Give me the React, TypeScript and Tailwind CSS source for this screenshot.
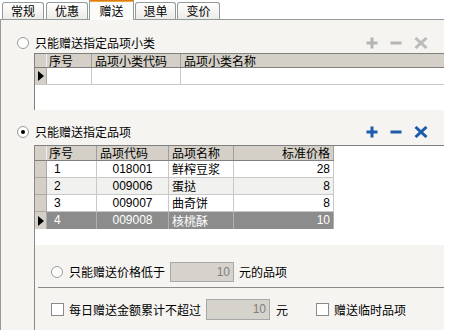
import React from "react";

const CJK = { fontFamily: '"Noto Sans CJK SC", "Noto Sans", sans-serif' };

function Plus({ c }: { c: string }) {
  return (
    <svg width="12" height="12" viewBox="0 0 12 12">
      <rect x="4.5" y="0.5" width="3" height="11" fill={c} />
      <rect x="0.5" y="4.5" width="11" height="3" fill={c} />
    </svg>
  );
}
function Minus({ c }: { c: string }) {
  return (
    <svg width="12" height="12" viewBox="0 0 12 12">
      <rect x="0.5" y="4.5" width="11" height="3" fill={c} />
    </svg>
  );
}
function Cross({ c }: { c: string }) {
  return (
    <svg width="14" height="12" viewBox="0 0 14 12">
      <path d="M1.5 1 L12.5 11 M12.5 1 L1.5 11" stroke={c} strokeWidth="3" />
    </svg>
  );
}

function Radio({ on }: { on?: boolean }) {
  return (
    <div className="w-[12px] h-[12px] rounded-full border border-[#9a9a9a] bg-white flex items-center justify-center shrink-0">
      {on && <div className="w-[4px] h-[4px] rounded-full bg-black" />}
    </div>
  );
}
function Check() {
  return <div className="w-[13px] h-[13px] border border-[#8a8a8a] bg-white shrink-0" />;
}

function Tab({ label, active, cls }: { label: string; active?: boolean; cls: string }) {
  if (active)
    return (
      <div className={"h-[20px] -mb-[1px] border-x border-[#919b9c] bg-[#fbfbfa] flex flex-col relative z-10 " + cls}>
        <div className="h-[3px] bg-[#f0a640] border-t border-[#e07a10]" />
        <div className="flex-1 flex items-center justify-center text-[12px] text-black">{label}</div>
      </div>
    );
  return (
    <div className={"h-[17px] border border-b-0 border-[#919b9c] rounded-t-[3px] bg-gradient-to-b from-white to-[#ecebe6] flex items-center justify-center text-[12px] text-black " + cls}>
      {label}
    </div>
  );
}

const indCls = "w-[12px] shrink-0 bg-[#d4d0c8] border-r border-b border-[#a8a8a8] flex items-center";

function Arrow() {
  return (
    <svg width="8" height="10" viewBox="0 0 8 10" className="ml-[2px]">
      <path d="M1 0 L7 5 L1 10 Z" fill="#000" />
    </svg>
  );
}

export default function App() {
  const rows = [
    { n: "1", code: "018001", name: "鲜榨豆浆", price: "28", bg: "bg-white" },
    { n: "2", code: "009006", name: "蛋挞", price: "8", bg: "bg-[#f1f1ef]" },
    { n: "3", code: "009007", name: "曲奇饼", price: "8", bg: "bg-white" },
  ];
  const num = { fontFamily: '"Liberation Sans", Arial, sans-serif' };
  return (
    <div className="w-[450px] h-[330px] bg-white overflow-hidden text-[12px] text-black" style={CJK}>
      {/* tab strip */}
      <div className="w-[444px] h-[20px] flex items-end border-b border-[#919b9c]">
        <Tab label="常规" cls="ml-[2px] w-[42px]" />
        <Tab label="优惠" cls="ml-[2px] w-[42px]" />
        <Tab label="赠送" active cls="ml-[1px] w-[45px]" />
        <Tab label="退单" cls="ml-[1px] w-[41px]" />
        <Tab label="变价" cls="ml-[1px] w-[43px]" />
      </div>
      {/* panel */}
      <div className="w-[444px] h-[310px] bg-[#f5f4f1] border-l border-[#9a9a9a] flex flex-col">
        {/* section 1 */}
        <div className="mt-[16px] h-[14px] flex items-center">
          <div className="ml-[16px]"><Radio /></div>
          <span className="ml-[6px] leading-none">只能赠送指定品项小类</span>
          <div className="ml-auto mr-[16px] flex items-center gap-[12px]">
            <Plus c="#b4b4b4" />
            <Minus c="#b4b4b4" />
            <Cross c="#bcbcbc" />
          </div>
        </div>
        <div className="mt-[3px] ml-[33px] h-[57px] border-l border-t border-[#808080] bg-white flex flex-col">
          <div className="h-[14px] flex bg-[#d4d0c8] border-b border-[#808080]">
            <div className="w-[12px] border-r border-[#f0f0f0]" />
            <div className="w-[45px] border-r border-[#a0a0a0] pl-[2px] leading-[14px]">序号</div>
            <div className="w-[89px] border-r border-[#a0a0a0] pl-[3px] leading-[14px]">品项小类代码</div>
            <div className="flex-1 pl-[3px] leading-[14px]">品项小类名称</div>
          </div>
          <div className="h-[17px] flex border-b border-[#c8c8c8]">
            <div className={indCls + " border-b-0"}><Arrow /></div>
            <div className="w-[45px] border-r border-[#c8c8c8]" />
            <div className="w-[89px] border-r border-[#c8c8c8]" />
            <div className="flex-1" />
          </div>
        </div>
        {/* section 2 */}
        <div className="mt-[15px] h-[14px] flex items-center">
          <div className="ml-[16px]"><Radio on /></div>
          <span className="ml-[6px] leading-none">只能赠送指定品项</span>
          <div className="ml-auto mr-[16px] flex items-center gap-[12px]">
            <Plus c="#1d5cad" />
            <Minus c="#1d5cad" />
            <Cross c="#1d5cad" />
          </div>
        </div>
        <div className="mt-[6px] ml-[33px] flex-1 border-l border-[#8a8a8a] flex flex-col">
          <div className="h-[100px] border-t border-[#808080] bg-white flex flex-col">
            <div className="h-[15px] flex bg-[#d4d0c8] border-b border-[#808080] w-[299px]">
              <div className="w-[12px] border-r border-[#f0f0f0]" />
              <div className="w-[50px] border-r border-[#a0a0a0] pl-[2px] leading-[14px]">序号</div>
              <div className="w-[72px] border-r border-[#a0a0a0] pl-[3px] leading-[14px]">品项代码</div>
              <div className="w-[65px] border-r border-[#a0a0a0] pl-[3px] leading-[14px]">品项名称</div>
              <div className="flex-1 text-right pr-[3px] leading-[14px] border-r border-[#a0a0a0]">标准价格</div>
            </div>
            {rows.map((r) => (
              <div key={r.n} className={"h-[17px] flex w-[299px] " + r.bg}>
                <div className={indCls} />
                <div className="w-[50px] border-r border-b border-[#c8c8c8] pl-[7px] leading-[16px]" style={num}>{r.n}</div>
                <div className="w-[72px] border-r border-b border-[#c8c8c8] text-center leading-[16px]" style={num}>{r.code}</div>
                <div className="w-[65px] border-r border-b border-[#c8c8c8] pl-[3px] leading-[16px]">{r.name}</div>
                <div className="flex-1 border-r border-b border-[#c8c8c8] text-right pr-[3px] leading-[16px]" style={num}>{r.price}</div>
              </div>
            ))}
            <div className="h-[17px] flex w-[299px] bg-[#8c8c8c] text-white">
              <div className="w-[12px] shrink-0 bg-[#d4d0c8] border-r border-[#a8a8a8] flex items-center"><Arrow /></div>
              <div className="w-[50px] border-r border-[#b0b0b0] pl-[7px] leading-[17px]" style={num}>4</div>
              <div className="w-[72px] border-r border-[#b0b0b0] text-center leading-[17px]" style={num}>009008</div>
              <div className="w-[65px] border-r border-[#b0b0b0] pl-[3px] leading-[17px]">核桃酥</div>
              <div className="flex-1 border-r border-[#b0b0b0] text-right pr-[3px] leading-[17px]" style={num}>10</div>
            </div>
          </div>
          {/* options */}
          <div className="mt-[17px] h-[20px] flex items-center">
            <div className="ml-[16px]"><Radio /></div>
            <span className="ml-[6px] leading-none">只能赠送价格低于</span>
            <div className="ml-[5px] w-[64px] h-[20px] bg-[#d6d3cc] border border-[#a8a8a8] text-right pr-[3px] leading-[18px] text-[#808080]" style={num}>10</div>
            <span className="ml-[5px] leading-none">元的品项</span>
          </div>
          <div className="mt-[5px] ml-[3px] border-t border-[#8a8a8a]" />
          <div className="mt-[11px] h-[21px] flex items-center">
            <div className="ml-[16px]"><Check /></div>
            <span className="ml-[5px] leading-none">每日赠送金额累计不超过</span>
            <div className="ml-[5px] w-[64px] h-[21px] bg-[#d6d3cc] border border-[#a8a8a8] text-right pr-[3px] leading-[19px] text-[#808080]" style={num}>10</div>
            <span className="ml-[6px] leading-none">元</span>
            <div className="ml-[28px]"><Check /></div>
            <span className="ml-[5px] leading-none">赠送临时品项</span>
          </div>
        </div>
      </div>
    </div>
  );
}
